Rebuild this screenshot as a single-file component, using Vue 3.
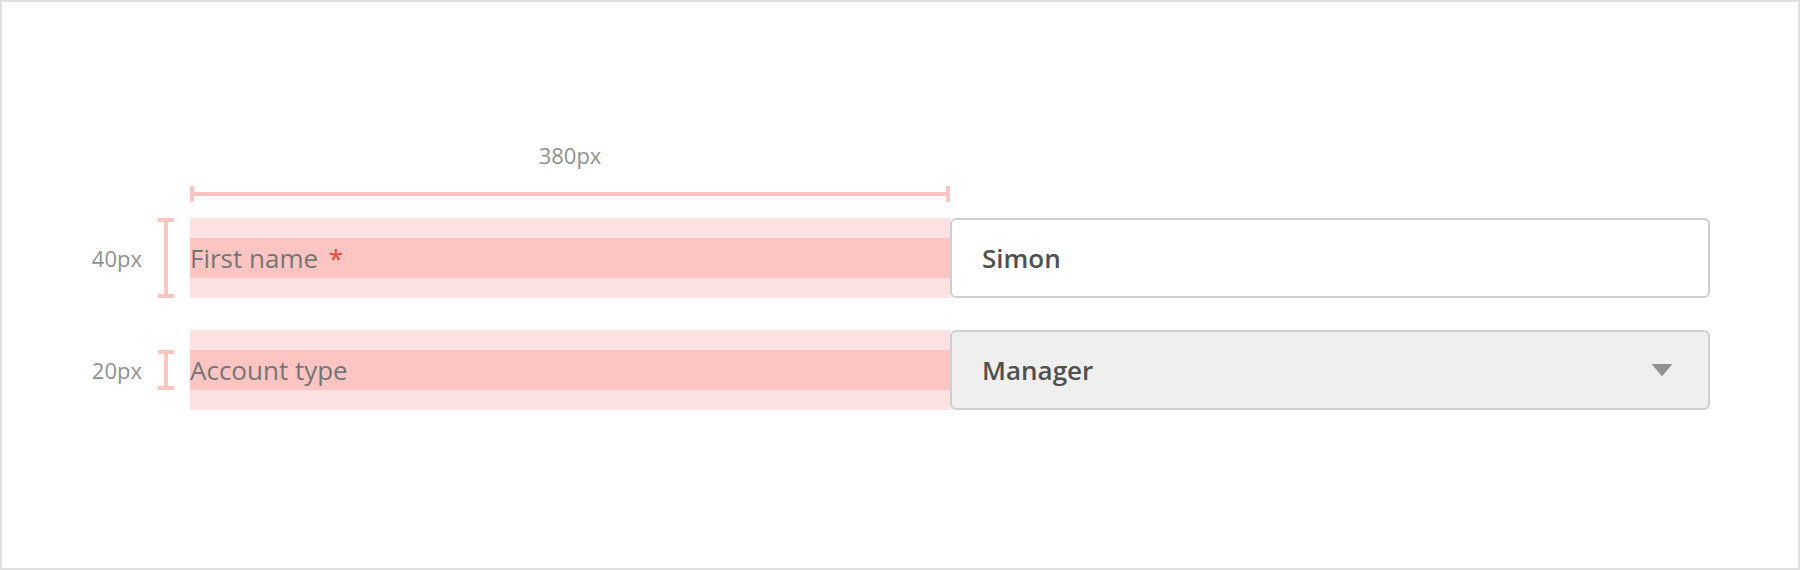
<script setup>
import { ref } from 'vue'

const firstName = ref('Simon')
const accountType = ref('Manager')
</script>

<template>
  <main class="frame">
    <form class="spec" @submit.prevent>
      <div class="width-measure">
        <span class="size">380px</span>
        <div class="ruler-x"><span class="line"></span></div>
      </div>

      <div class="row">
        <span class="size size-side">40px</span>
        <div class="ruler-y"><span class="line"></span></div>
        <div class="label-box">
          <label for="first-name">First name <span class="required">*</span></label>
        </div>
        <div class="field">
          <input id="first-name" v-model="firstName" class="control" type="text" required />
        </div>
      </div>

      <div class="row">
        <span class="size size-side">20px</span>
        <div class="ruler-y ruler-short"><span class="line"></span></div>
        <div class="label-box">
          <label for="account-type">Account type</label>
        </div>
        <div class="field">
          <select id="account-type" v-model="accountType" class="control select">
            <option>Manager</option>
          </select>
          <svg class="arrow" viewBox="0 0 20 12" width="20" height="12" aria-hidden="true">
            <path d="M0.6 0H19.4Q20.3 0.3 19.6 1.1L10.7 11.6Q10 12.3 9.3 11.6L0.4 1.1Q-0.3 0.3 0.6 0Z" />
          </svg>
        </div>
      </div>
    </form>
  </main>
</template>

<style>
body {
  background: #fff;
}
</style>

<style scoped>
.frame {
  box-sizing: border-box;
  min-height: 100vh;
  padding: 138px 88px 88px;
  border: 2px solid #e0e0e0;
  background: #fff;
  font-family: "Open Sans", "Noto Sans", sans-serif;
}

.spec {
  display: grid;
  grid-template-columns: 52px 16px minmax(0, 1fr) minmax(0, 1fr);
  column-gap: 16px;
  row-gap: 32px;
}

.width-measure {
  grid-column: 3;
  display: flex;
  flex-direction: column;
  gap: 16px;
  margin-right: -8px;
  margin-bottom: -16px;
  text-align: center;
}

.row {
  grid-column: 1 / -1;
  display: grid;
  grid-template-columns: 52px 16px minmax(0, 1fr);
  column-gap: 16px;
  align-items: center;
}

.size {
  color: #919191;
  font-size: 22px;
  line-height: 30px;
}

.size-side {
  text-align: right;
}

.ruler-x,
.ruler-y {
  box-sizing: border-box;
  display: flex;
  border: 0 solid #fcc5c1;
}

.ruler-x {
  height: 16px;
  align-items: center;
  border-width: 0 4px;
}

.ruler-x .line {
  flex: 1;
  height: 4px;
  background: #fcc5c1;
}

.ruler-y {
  height: 80px;
  justify-content: center;
  border-width: 4px 0;
}

.ruler-short {
  height: 40px;
}

.ruler-y .line {
  width: 4px;
  background: #fcc5c1;
}

.row {
  grid-template-columns: 52px 16px minmax(0, 1fr) minmax(0, 1fr);
}

.label-box {
  padding: 20px 0;
  margin-right: -8px;
  background: #fee2e2;
}

.label-box label {
  display: block;
  background: #fcc5c1;
  color: #757575;
  font-size: 26px;
  line-height: 40px;
}

.required {
  margin-left: 4px;
  color: #f44336;
}

.field {
  position: relative;
  margin-left: -8px;
}

.control {
  box-sizing: border-box;
  display: block;
  width: 100%;
  height: 80px;
  margin: 0;
  padding: 0 30px;
  border: 2px solid #cfcfcf;
  border-radius: 6px;
  outline: none;
  background: #fff;
  color: #505050;
  font-family: inherit;
  font-size: 26px;
  font-weight: 600;
}

.select {
  appearance: none;
  background: #efefef;
}

.arrow {
  position: absolute;
  top: 34px;
  right: 38px;
  fill: #919191;
  pointer-events: none;
}
</style>
